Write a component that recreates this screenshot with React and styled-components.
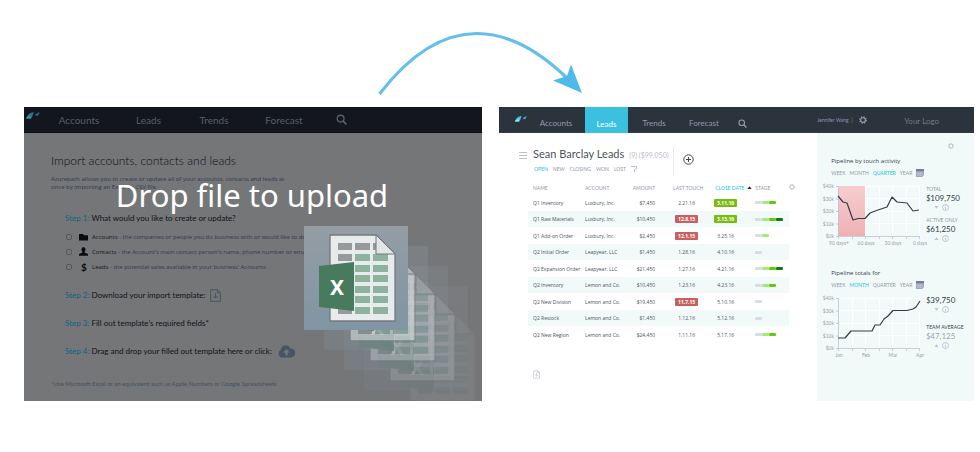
import React from "react";
import styled, { createGlobalStyle, css } from "styled-components";

const Global = createGlobalStyle`
  *, *::before, *::after { box-sizing: border-box; }
  body { margin: 0; background: #fff; font-family: Lato, "Open Sans", sans-serif; }
  h1, h2, h3, p, ul, dl, dd, dt, fieldset { margin: 0; padding: 0; border: 0; font-weight: 400; }
  button { font: inherit; color: inherit; background: none; border: 0; padding: 0; margin: 0; cursor: pointer; }
  svg { display: block; flex: none; }
`;

const ArrowBand = styled.header`
  display: flex;
  justify-content: center;
  padding: 27px 20px 0 0;
`;

const Screens = styled.main`
  display: flex;
  align-items: stretch;
  gap: 17px;
  padding: 0 6px 51px 24px;
`;

/* ---------- shared navigation ---------- */

const NavBar = styled.nav`
  display: flex;
  height: 26px;
  background: ${(p) => (p.$dim ? "#13171d" : "#2b333d")};
  color: ${(p) => (p.$dim ? "#585d6b" : "#929aae")};
  font-size: ${(p) => (p.$dim ? 10 : 8)}px;
  border-bottom: 1px solid ${(p) => (p.$dim ? "#0b0d12" : "#363d47")};
`;

const Brand = styled.div`
  width: ${(p) => p.$width}px;
  padding-top: ${(p) => (p.$dim ? 3 : 7)}px;
  padding-left: ${(p) => (p.$dim ? 1 : 15)}px;
`;

const NavItem = styled.button`
  width: ${(p) => p.$width}px;
  display: flex;
  justify-content: center;
  align-items: center;
  padding-top: ${(p) => p.$drop || 0}px;
  ${(p) =>
    p.$active &&
    css`
      background: #3bc0df;
      color: #fff;
      margin-bottom: -1px;
    `}
`;

const NavUser = styled.div`
  width: 33%;
  margin-left: auto;
  display: flex;
  align-items: center;
  font-size: 5px;
  white-space: nowrap;
`;

const UserName = styled.span`
  flex: none;
  width: 42px;
`;

const LogoSlot = styled.span`
  margin-left: 37px;
  padding-top: 3px;
  font-size: 8px;
  color: #707a8b;
`;

/* ---------- import screen ---------- */

const ImportScreen = styled.section`
  position: relative;
  flex: 458 1 0;
  min-width: 0;
  overflow: hidden;
  background: #757678;
  color: #101217;
`;

const ImportBody = styled.div`
  padding: 21px 20px 10px 27px;
`;

const ImportTitle = styled.h1`
  font-size: 12px;
  line-height: 14px;
  font-weight: 300;
  color: #0d0f17;
`;

const Intro = styled.p`
  margin-top: 7px;
  max-width: 240px;
  font-family: "Open Sans", sans-serif;
  font-size: 6px;
  line-height: 8px;
  color: #34384f;
  white-space: nowrap;
`;

const Steps = styled.div`
  margin: 20px 0 0 14px;
`;

const Step = styled.h2`
  display: flex;
  align-items: center;
  height: 14px;
  margin-bottom: 14px;
  font-size: 8px;
  gap: 2px;
  white-space: nowrap;
`;

const StepNumber = styled.span`
  color: #0f6389;
`;

const StepButton = styled.button`
  margin-left: ${(p) => p.$gap}px;
  color: #465463;
`;

const Choices = styled.fieldset`
  margin: -10px 0 14px;
  display: grid;
  grid-auto-rows: 15px;
`;

const Choice = styled.label`
  display: flex;
  align-items: center;
  font-family: "Open Sans", sans-serif;
  font-size: 6px;
  color: #34384f;
  white-space: nowrap;
  b { color: #14151c; font-weight: 400; }
`;

const Radio = styled.input`
  appearance: none;
  flex: none;
  width: 6px;
  height: 6px;
  margin: 0 7px 0 1px;
  border: 1px solid #55585d;
  border-radius: 2px;
`;

const ChoiceIcon = styled.span`
  width: 13px;
  display: flex;
  color: #090b10;
`;

const Footnote = styled.p`
  margin-top: 19px;
  font-size: 6px;
  line-height: 14px;
  color: #435261;
`;

const DropMessage = styled.p`
  position: absolute;
  left: 0;
  right: 0;
  top: 71px;
  padding-right: 2px;
  text-align: center;
  font-family: "Noto Sans", "Open Sans", sans-serif;
  font-size: 31px;
  line-height: 34px;
  color: #fff;
`;

const DragStack = styled.div`
  position: absolute;
  left: 280px;
  top: 119px;
`;

/* ---------- leads screen ---------- */

const LeadsScreen = styled.section`
  flex: 475 1 0;
  min-width: 0;
  display: flex;
  flex-direction: column;
  color: #4b5360;
`;

const LeadsBody = styled.div`
  flex: 1;
  display: grid;
  grid-template-columns: minmax(0, 67fr) minmax(0, 33fr);
`;

const LeadsMain = styled.div`
  padding: 14px 22px 0 20px;
`;

const TitleRow = styled.div`
  display: flex;
  align-items: center;
`;

const MenuButton = styled.button`
  width: 14px;
  margin-bottom: 12px;
`;

const TitleGroup = styled.div`
  width: 141px;
  border-right: 1px solid #e4e7eb;
  white-space: nowrap;
`;

const ListTitle = styled.h2`
  display: flex;
  align-items: baseline;
  gap: 5px;
  font-size: 11px;
  line-height: 14px;
`;

const Count = styled.span`
  font-size: 7px;
  color: #b9bccb;
`;

const Filters = styled.div`
  display: flex;
  align-items: center;
  height: 14px;
  gap: 5px;
  padding-left: 1px;
  font-size: 5px;
  color: #8f96a8;
`;

const Tab = styled.button`
  color: ${(p) => (p.$active ? "#22bfe0" : "inherit")};
`;

const AddButton = styled.button`
  margin: 0 0 4px 9px;
`;

const TableWrap = styled.div`
  display: flex;
  margin: 5px 0 0 9px;
`;

const LeadTable = styled.table`
  flex: 1;
  table-layout: fixed;
  border-collapse: collapse;
  font-family: "Open Sans", sans-serif;
  font-size: 5px;
  line-height: 8px;
  white-space: nowrap;
`;

const Row = styled.tr`
  height: ${(p) => (p.$striped ? 16 : 17)}px;
  background: ${(p) => (p.$striped ? "#f1faf9" : "#fff")};
`;

const Th = styled.th`
  height: 13px;
  padding: 0 0 0 ${(p) => p.$left || 0}px;
  padding-right: ${(p) => p.$right || 0}px;
  width: ${(p) => p.$width}px;
  font-family: Lato, sans-serif;
  font-size: 5px;
  font-weight: 400;
  text-align: ${(p) => p.$align || "left"};
  color: ${(p) => (p.$active ? "#22bfe0" : "#9298a8")};
`;

const SortButton = styled.button`
  display: flex;
  align-items: center;
  gap: 3px;
`;

const Td = styled.td`
  padding: 0 0 0 ${(p) => p.$left || 0}px;
  padding-right: ${(p) => p.$right || 0}px;
  text-align: ${(p) => p.$align || "left"};
`;

const tones = { late: "#c95f5f", soon: "#7abb12" };
const DateTag = styled.span`
  display: block;
  width: 23px;
  text-align: center;
  border-radius: 1px;
  background: ${(p) => tones[p.$tone] || "transparent"};
  color: ${(p) => (p.$tone ? "#fff" : "inherit")};
  font-weight: ${(p) => (p.$tone ? 700 : 400)};
`;

const StageBars = styled.div`
  display: flex;
`;

const stageColors = ["#d8dce3", "#a5e87f", "#62cb0d", "#0b7f14"];
const StageBar = styled.span`
  width: 7px;
  height: 3px;
  border-radius: 1px;
  background: ${(p) => stageColors[p.$level]};
`;

const IconButton = styled.button`
  display: block;
  align-self: flex-start;
  margin-top: ${(p) => p.$top || 0}px;
  margin-left: ${(p) => p.$left || 0}px;
  color: #b6bac6;
`;

/* ---------- sidebar ---------- */

const Sidebar = styled.aside`
  padding: 10px 10px 0 7px;
  background: #f1faf9;
`;

const SidebarTop = styled.div`
  display: flex;
  justify-content: flex-end;
  height: 12px;
  padding-right: 10px;
`;

const Widget = styled.section`
  margin-bottom: ${(p) => p.$after || 0}px;
`;

const WidgetTitle = styled.h3`
  padding-left: 7px;
  font-family: "Open Sans", sans-serif;
  font-size: 6px;
  line-height: 12px;
  color: #363d4a;
`;

const Periods = styled.div`
  display: flex;
  align-items: center;
  height: 11px;
  padding-left: 7px;
  gap: 4px;
  font-size: 5px;
  color: #9298ac;
`;

const WidgetBody = styled.div`
  display: flex;
  margin-top: 5px;
`;

const Stats = styled.dl`
  padding-top: ${(p) => p.$top || 0}px;
  display: flex;
  flex-direction: column;
  white-space: nowrap;
`;

const StatLabel = styled.dt`
  font-size: 5px;
  line-height: 7px;
  margin-top: ${(p) => p.$before || 0}px;
  color: ${(p) => (p.$strong ? "#3b424e" : "#9298ac")};
`;

const StatValue = styled.dd`
  font-size: 8px;
  line-height: 10px;
  color: ${(p) => (p.$muted ? "#9ea4b4" : "#333b47")};
  small { font-size: 7px; }
`;

const StatNote = styled.dd`
  display: flex;
  align-items: center;
  gap: 3px;
  height: 9px;
  padding-left: 8px;
`;

/* ---------- drawings ---------- */

const CurveArrow = () => (
  <svg width="206" height="80" viewBox="377 27 206 80" aria-hidden="true">
    <path d="M379.500 94C411 53 443 33.500 477 33.500C508 33.500 538 50 567 78" fill="none" stroke="#66bfeb" strokeWidth="3.200" />
    <path d="M582 93L571 64.500L567 76L553 80.500Z" fill="#4ebaea" />
  </svg>
);

const BirdMark = ({ dim }) => (
  <svg width={dim ? 15 : 13} height={dim ? 10 : 9} viewBox="0 0 15 10" opacity={dim ? 0.55 : 1} aria-hidden="true">
    <path d="M1 8.500C3 4 5 2.500 9 2.500C7.500 4 8 6.500 6 8.500Z" fill="#45c6e6" />
    <path d="M1 8.500C2 7 3 6 5 6L6 8.500Z" fill="#9be9f2" />
    <path d="M10 4.500L14.500 2C14 4.500 13 6 11.500 6Z" fill="#3aa9cf" />
  </svg>
);

const SearchIcon = ({ size }) => (
  <svg width={size} height={size} viewBox="0 0 12 12" fill="none" stroke="currentColor" strokeWidth="1.500">
    <circle cx="5" cy="5" r="3.700" />
    <path d="M7.600 7.600L11.300 11.300" strokeWidth="1.900" />
  </svg>
);

const GearIcon = ({ size, hole = 2.6 }) => (
  <svg width={size} height={size} viewBox="0 0 12 12" fill="none" stroke="currentColor">
    <circle cx="6" cy="6" r={hole + 1} strokeWidth="1.800" />
    <circle cx="6" cy="6" r="5" strokeWidth="1.600" strokeDasharray="2 1.927" />
  </svg>
);

const FileDownIcon = ({ width, height, weight = 1 }) => (
  <svg width={width} height={height} viewBox="0 0 11 13" fill="none" stroke="currentColor" strokeWidth={weight}>
    <path d="M.7.7H7.500L10.300 3.500V12.300H.7Z" />
    <path d="M7.300.7V3.700H10.300M5.500 4V9M3.300 7L5.500 9.200L7.700 7" />
  </svg>
);

const CloudIcon = () => (
  <svg width="17" height="13" viewBox="0 0 17 13">
    <path d="M4 12.500A4 4 0 0 1 2.700 5A5 5 0 0 1 12.300 3.500A4.500 4.500 0 0 1 13 12.500Z" fill="currentColor" />
    <path d="M8.500 4L12 7.500H9.700V10.500H7.300V7.500H5Z" fill="#757678" />
  </svg>
);

const FolderIcon = () => (
  <svg width="9" height="8" viewBox="0 0 9 8"><path d="M0 1H4L5 2.200H9V7.500H0Z" fill="currentColor" /></svg>
);

const PersonIcon = () => (
  <svg width="9" height="9" viewBox="0 0 9 9" fill="currentColor">
    <ellipse cx="4.500" cy="2.500" rx="2" ry="2.500" />
    <path d="M3.500 4H5.500V5.500L9 7V8.800H0V7L3.500 5.500Z" />
  </svg>
);

const DollarSign = styled.span`
  padding-left: 2px;
  font-family: Lato, sans-serif;
  font-size: 10px;
  line-height: 12px;
  font-weight: 700;
`;

const MenuIcon = () => (
  <svg width="8" height="7" viewBox="0 0 8 7" stroke="#bcc1cc"><path d="M0 .5H8M0 3.500H8M0 6.500H8" /></svg>
);

const PlusIcon = () => (
  <svg width="11" height="11" viewBox="0 0 11 11" fill="none" stroke="#3c4552">
    <circle cx="5.500" cy="5.500" r="4.700" />
    <path d="M3 5.500H8M5.500 3V8" />
  </svg>
);

const FilterIcon = () => (
  <svg width="6" height="6" viewBox="0 0 6 6" fill="none" stroke="#b9bdc9"><path d="M0 .5H5.500V2.500L3.500 3.500V6" /></svg>
);

const CalendarIcon = () => (
  <svg width="8" height="8" viewBox="0 0 8 8">
    <rect width="8" height="8" rx=".6" fill="#a4aabd" />
    <rect width="8" height="2.300" fill="#767f98" />
    <path d="M1 4H7M1 6H7M2.500 3V7M4.500 3V7" stroke="#c7ccd8" strokeWidth=".5" />
    <path d="M6.300 8L8 6.300V8Z" fill="#f1faf9" />
  </svg>
);

const Triangle = ({ up, dark }) => (
  <svg width="5" height="3" viewBox="0 0 5 3">
    <path d={up ? "M.3 2.900L2.500.2L4.700 2.900Z" : "M.3.1L2.500 2.800L4.700.1Z"} fill={dark ? "#222b37" : "#c0c5d0"} />
  </svg>
);

const InfoIcon = () => (
  <svg width="7" height="7" viewBox="0 0 7 7" fill="none" stroke="#b4bac8" strokeWidth=".8">
    <circle cx="3.500" cy="3.500" r="3" />
    <path d="M3.500 1.500V2.200M3.500 3V5.500" />
  </svg>
);

const SheetPage = () => (
  <>
    <path d="M26 9H72L91 28V95H26Z" fill="#e8ebec" stroke="#74797d" strokeWidth="1.300" />
    {[17, 28, 39, 49, 60, 70, 81].map((y, row) =>
      [34, 51, 69].map((x, col) => (
        <rect key={x + "-" + y} x={x} y={y} width={col ? 15 : 14} height="7"
          fill={col === 0 || row === 0 ? "#98999a" : "#8db39f"} />
      ))
    )}
    <path d="M72 9V28H91Z" fill="#e2e5e6" stroke="#74797d" />
  </>
);

const SheetBadge = styled.text`
  font: 700 21px "Noto Sans", sans-serif;
`;

const SheetFile = ({ x, y, opacity, plate }) => (
  <g transform={`translate(${x} ${y})`}>
    <rect width="104" height="104" fill="url(#plate)" opacity={plate} />
    <g opacity={opacity}>
      <SheetPage />
      <path d="M15 40L50 36V85L15 81Z" fill="#487a5d" />
      <SheetBadge x="33" y="69" textAnchor="middle" fill="#fff">X</SheetBadge>
    </g>
  </g>
);

const ghosts = [
  { x: 80, y: 80, opacity: 0.07, plate: 0 },
  { x: 60, y: 60, opacity: 0.16, plate: 0.12 },
  { x: 40, y: 40, opacity: 0.3, plate: 0.2 },
  { x: 20, y: 20, opacity: 0.5, plate: 0.25 },
];

const DraggedFiles = () => (
  <svg width="184" height="184" viewBox="0 0 184 184" role="img" aria-label="Spreadsheet being dragged">
    <defs>
      <linearGradient id="plate" x1="0" y1="0" x2="0" y2="1">
        <stop offset="0" stopColor="#949da4" />
        <stop offset="1" stopColor="#8195a3" />
      </linearGradient>
    </defs>
    {ghosts.map((g) => <SheetFile key={g.x} {...g} />)}
    <SheetFile x={0} y={0} opacity={1} plate={1} />
  </svg>
);

const ChartSvg = styled.svg`
  overflow: visible;
`;

const AxisText = styled.text`
  font: 5px Lato, sans-serif;
  fill: #9ba1ae;
`;

const Chart = ({ points, labels, highlight, title }) => (
  <ChartSvg width="102" height="66" viewBox="0 0 102 66" role="img" aria-label={title}>
    <defs>
      <linearGradient id="late" x1="0" y1="0" x2="0" y2="1">
        <stop offset="0" stopColor="#f6cdcf" />
        <stop offset="1" stopColor="#efb1b3" />
      </linearGradient>
    </defs>
    {[28, 41, 55, 68, 82, 95].map((x) => <path key={x} d={`M${x}.500 3V53`} stroke="#fff" />)}
    {[3, 15, 28, 40].map((y) => <path key={y} d={`M14 ${y}.500H95`} stroke="#fff" />)}
    {highlight && <rect x="14" y="3" width="27" height="50" fill="url(#late)" />}
    {["$40k", "$30k", "$20k", "$10k", "$0k"].map((t, i) => (
      <g key={t}>
        <AxisText x="10" y={5 + i * 12.5} textAnchor="end">{t}</AxisText>
        <path d={`M12 ${3.5 + i * 12.5}H14`} stroke="#aeb3be" strokeWidth=".7" />
      </g>
    ))}
    <path d="M14.500 3V53.500H95M14.500 53V56M28.500 53V56M41.500 53V56M55.500 53V56M68.500 53V56M82.500 53V56M95.500 53V56"
      fill="none" stroke="#bfc4cd" strokeWidth=".8" />
    {labels.map((t, i) => (
      <AxisText key={t} x={15 + i * 27} y="62" textAnchor="middle">{t}</AxisText>
    ))}
    <polyline points={points} fill="none" stroke="#343c49" strokeWidth="1.200" strokeLinejoin="round" />
  </ChartSvg>
);

/* ---------- composed parts ---------- */

const leads = [
  ["Q1 Inventory", "Luxbury, Inc.", "$7,450", "2.21.16", "", "3.11.16", "soon", 3],
  ["Q1 Raw Materials", "Luxbury, Inc.", "$10,450", "12.8.15", "late", "3.15.16", "soon", 4],
  ["Q1 Add-on Order", "Luxbury, Inc.", "$2,450", "12.1.15", "late", "3.25.16", "", 2],
  ["Q2 Initial Order", "Leapyear, LLC", "$1,450", "1.28.16", "", "4.10.16", "", 1],
  ["Q2 Expansion Order", "Leapyear, LLC", "$21,450", "1.27.16", "", "4.21.16", "", 4],
  ["Q2 Inventory", "Lemon and Co.", "$10,450", "1.23.16", "", "4.23.16", "", 3],
  ["Q2 New Division", "Lemon and Co.", "$19,450", "11.7.15", "late", "5.10.16", "", 1],
  ["Q2 Restock", "Lemon and Co.", "$1,450", "1.12.16", "", "5.12.16", "", 1],
  ["Q2 New Region", "Lemon and Co.", "$24,450", "1.11.16", "", "5.17.16", "", 3],
];

const choices = [
  ["Accounts", "the companies or people you do business with or would like to do", <FolderIcon />],
  ["Contacts", "the Account’s main contact person’s name, phone number or email", <PersonIcon />],
  ["Leads", "the potential sales available in your business’ Accounts", <DollarSign>$</DollarSign>],
];

const PeriodTabs = ({ active }) => (
  <Periods>
    {["WEEK", "MONTH", "QUARTER", "YEAR"].map((p) => (
      <Tab key={p} $active={p === active}>{p}</Tab>
    ))}
    <button aria-label="Pick dates"><CalendarIcon /></button>
  </Periods>
);

const Note = ({ up }) => (
  <StatNote><Triangle up={up} /><InfoIcon /></StatNote>
);

const ImportView = () => (
  <ImportScreen>
    <NavBar $dim>
      <Brand $dim $width={20}><BirdMark dim /></Brand>
      <NavItem $width={70}>Accounts</NavItem>
      <NavItem $width={69}>Leads</NavItem>
      <NavItem $width={62}>Trends</NavItem>
      <NavItem $width={78}>Forecast</NavItem>
      <NavItem $width={36} aria-label="Search"><SearchIcon size={11} /></NavItem>
    </NavBar>
    <ImportBody>
      <ImportTitle>Import accounts, contacts and leads</ImportTitle>
      <Intro>
        Azurepath allows you to create or update all of your accounts, contacts and leads at
        <br />
        once by importing an Excel or CSV file.
      </Intro>
      <Steps>
        <Step><StepNumber>Step 1:</StepNumber>What would you like to create or update?</Step>
        <Choices>
          {choices.map(([name, text, icon]) => (
            <Choice key={name}>
              <Radio type="radio" name="kind" />
              <ChoiceIcon>{icon}</ChoiceIcon>
              <span><b>{name}</b> - {text}</span>
            </Choice>
          ))}
        </Choices>
        <Step>
          <StepNumber>Step 2:</StepNumber>Download your import template:
          <StepButton $gap={2} aria-label="Download template"><FileDownIcon width={11} height={13} /></StepButton>
        </Step>
        <Step><StepNumber>Step 3:</StepNumber>Fill out template’s required fields*</Step>
        <Step>
          <StepNumber>Step 4:</StepNumber>Drag and drop your filled out template here or click:
          <StepButton $gap={4} aria-label="Upload template"><CloudIcon /></StepButton>
        </Step>
      </Steps>
      <Footnote>*Use Microsoft Excel or an equivalent such as Apple Numbers or Google Spreadsheets</Footnote>
    </ImportBody>
    <DropMessage>Drop file to upload</DropMessage>
    <DragStack><DraggedFiles /></DragStack>
  </ImportScreen>
);

const LeadsView = () => (
  <LeadsScreen>
    <NavBar>
      <Brand $width={28}><BirdMark /></Brand>
      <NavItem $width={58} $drop={7}>Accounts</NavItem>
      <NavItem $width={43} $drop={7} $active>Leads</NavItem>
      <NavItem $width={52} $drop={7}>Trends</NavItem>
      <NavItem $width={48} $drop={7}>Forecast</NavItem>
      <NavItem $width={28} $drop={7} aria-label="Search"><SearchIcon size={9} /></NavItem>
      <NavUser>
        <UserName>Jennifer Wang &nbsp;|</UserName>
        <button aria-label="Settings"><GearIcon size={8} /></button>
        <LogoSlot>Your Logo</LogoSlot>
      </NavUser>
    </NavBar>
    <LeadsBody>
      <LeadsMain>
        <TitleRow>
          <MenuButton aria-label="Menu"><MenuIcon /></MenuButton>
          <TitleGroup>
            <ListTitle>Sean Barclay Leads <Count>(9) ($99,050)</Count></ListTitle>
            <Filters>
              <Tab $active>OPEN</Tab>
              <Tab>NEW</Tab>
              <Tab>CLOSING</Tab>
              <Tab>WON</Tab>
              <Tab>LOST</Tab>
              <button aria-label="Filter"><FilterIcon /></button>
            </Filters>
          </TitleGroup>
          <AddButton aria-label="Add lead"><PlusIcon /></AddButton>
        </TitleRow>
        <TableWrap>
          <LeadTable>
            <thead>
              <tr>
                <Th $width={57} $left={5}>NAME</Th>
                <Th $width={44}>ACCOUNT</Th>
                <Th $width={37} $align="right" $right={11}>AMOUNT</Th>
                <Th $width={39} $left={7}>LAST TOUCH</Th>
                <Th $width={50} $left={10} $active>
                  <SortButton>CLOSE DATE <Triangle up dark /></SortButton>
                </Th>
                <Th $width={34}>STAGE</Th>
              </tr>
            </thead>
            <tbody>
              {leads.map(([name, account, amount, touch, touchTone, close, closeTone, stage], i) => (
                <Row key={name} $striped={i % 2 === 1}>
                  <Td $left={5}>{name}</Td>
                  <Td>{account}</Td>
                  <Td $align="right" $right={11}>{amount}</Td>
                  <Td $left={9}><DateTag $tone={touchTone}>{touch}</DateTag></Td>
                  <Td $left={9}><DateTag $tone={closeTone}>{close}</DateTag></Td>
                  <Td>
                    <StageBars>
                      {stageColors.slice(0, stage).map((c, level) => <StageBar key={c} $level={level} />)}
                    </StageBars>
                  </Td>
                </Row>
              ))}
            </tbody>
          </LeadTable>
          <IconButton $top={3} aria-label="Table settings"><GearIcon size={6} hole={3} /></IconButton>
        </TableWrap>
        <IconButton $top={27} $left={14} aria-label="Export"><FileDownIcon width={7} height={9} /></IconButton>
      </LeadsMain>
      <Sidebar>
        <SidebarTop>
          <IconButton aria-label="Widget settings"><GearIcon size={6} hole={3} /></IconButton>
        </SidebarTop>
        <Widget $after={18}>
          <WidgetTitle>Pipeline by touch activity</WidgetTitle>
          <PeriodTabs active="QUARTER" />
          <WidgetBody>
            <Chart
              title="Pipeline by touch activity"
              highlight
              labels={["90 days+", "60 days", "30 days", "0 days"]}
              points="14,13 19,19 23,20 29,37 34,35.500 41,35.500 46,30 54,27 63,24 68,14 73,19 83,20 89,28 95,27"
            />
            <Stats $top={3}>
              <StatLabel>TOTAL</StatLabel>
              <StatValue><small>$</small>109,750</StatValue>
              <Note />
              <StatLabel $before={5}>ACTIVE ONLY</StatLabel>
              <StatValue><small>$</small>61,250</StatValue>
              <Note up />
            </Stats>
          </WidgetBody>
        </Widget>
        <Widget>
          <WidgetTitle>Pipeline totals for</WidgetTitle>
          <PeriodTabs active="MONTH" />
          <WidgetBody>
            <Chart
              title="Pipeline totals"
              labels={["Jan", "Feb", "Mar", "Apr"]}
              points="14,43 21,43 27,36 48,36 51,30 56,30 60,24 64,21 69,15.500 83,15.500 89,14 92,12 96,6"
            />
            <Stats>
              <StatValue><small>$</small>39,750</StatValue>
              <Note />
              <StatLabel $before={10} $strong>TEAM AVERAGE</StatLabel>
              <StatValue $muted><small>$</small>47,125</StatValue>
              <Note up />
            </Stats>
          </WidgetBody>
        </Widget>
      </Sidebar>
    </LeadsBody>
  </LeadsScreen>
);

export default function App() {
  return (
    <>
      <Global />
      <ArrowBand><CurveArrow /></ArrowBand>
      <Screens>
        <ImportView />
        <LeadsView />
      </Screens>
    </>
  );
}
